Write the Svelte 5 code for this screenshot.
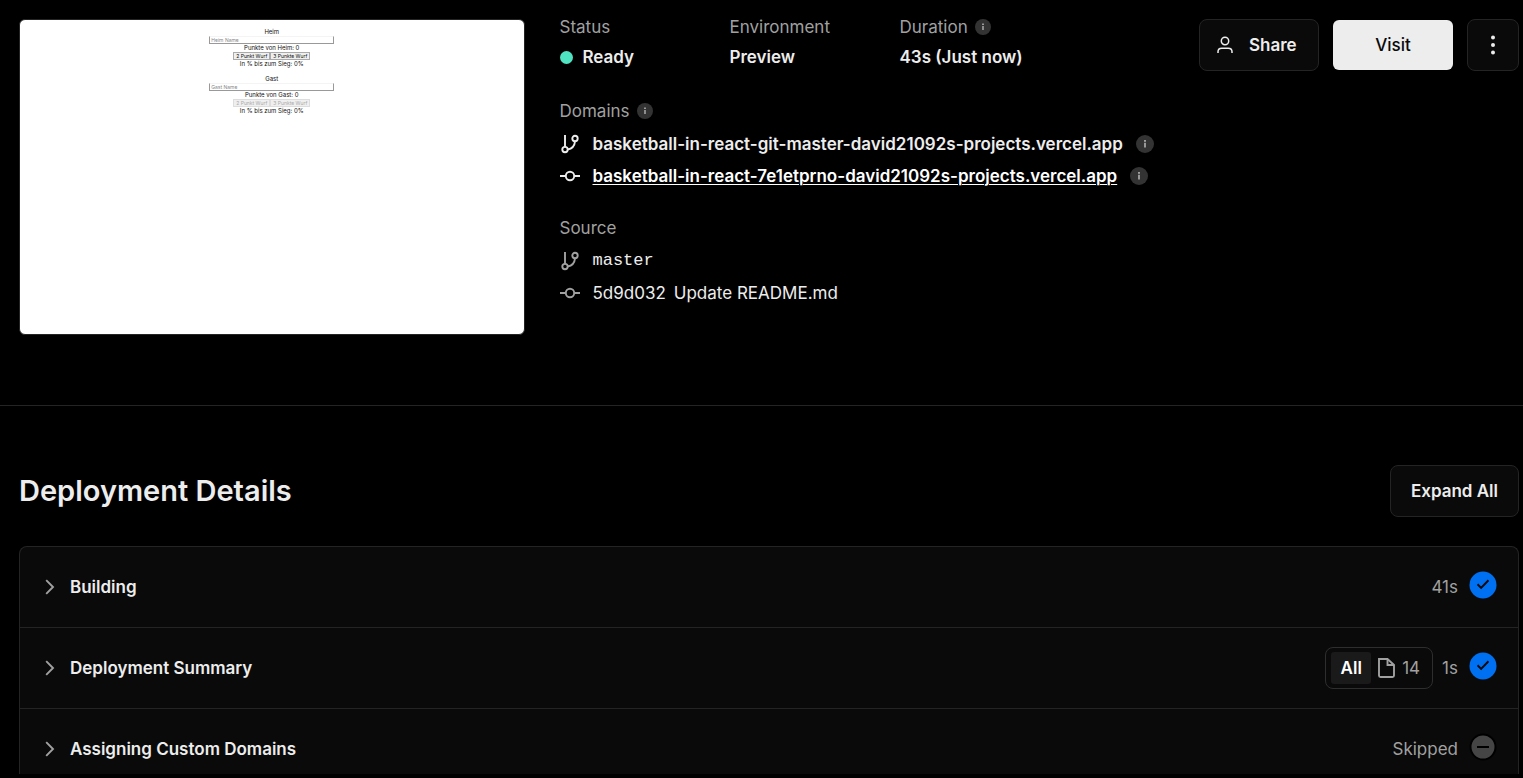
<script>
  const teams = [
    { name: 'Heim', disabled: false },
    { name: 'Gast', disabled: true }
  ];
  const domains = [
    { icon: 'branch', host: 'basketball-in-react-git-master-david21092s-projects.vercel.app', active: false },
    { icon: 'commit', host: 'basketball-in-react-7e1etprno-david21092s-projects.vercel.app', active: true }
  ];
  const steps = [
    { title: 'Building', note: '41s', done: true },
    { title: 'Deployment Summary', note: '1s', done: true, files: 14 },
    { title: 'Assigning Custom Domains', note: 'Skipped', done: false }
  ];
</script>

{#snippet info(large)}
  <svg class="info" class:large viewBox="0 0 16 16" aria-hidden="true">
    <circle cx="8" cy="8" r="8" fill="#333" />
    <path d="M8 6.900v4.200" stroke="#b4b4b4" stroke-width="1.400" />
    <rect x="7.200" y="4.500" width="1.600" height="1.500" fill="#b4b4b4" />
  </svg>
{/snippet}

{#snippet git(kind)}
  <svg class="git" viewBox="0 0 20 20" fill="none" stroke="currentColor" stroke-width="1.900" aria-hidden="true">
    {#if kind === 'branch'}
      <path d="M5 1v12M15 7.200c-.3 4.300-3 7.600-7.500 8.300" />
      <circle cx="5" cy="15.600" r="2.700" />
      <circle cx="15" cy="4.500" r="2.700" />
    {:else}
      <path d="M0 10h5.800M14.200 10H20" />
      <circle cx="10" cy="10" r="4.200" />
    {/if}
  </svg>
{/snippet}

<div class="page">
  <header class="overview">
    <div class="preview">
      {#each teams as team}
        <section class="team">
          <p>{team.name}</p>
          <input type="text" placeholder="{team.name} Name" aria-label="{team.name} Name" />
          <p>Punkte von {team.name}: 0</p>
          <div class="throws">
            <button disabled={team.disabled}>2 Punkt Wurf</button><button disabled={team.disabled}>3 Punkte Wurf</button>
          </div>
          <p>In % bis zum Sieg: 0%</p>
        </section>
      {/each}
    </div>

    <div class="facts">
      <dl class="stats">
        <div>
          <dt>Status</dt>
          <dd><span class="dot"></span>Ready</dd>
        </div>
        <div>
          <dt>Environment</dt>
          <dd>Preview</dd>
        </div>
        <div>
          <dt>Duration {@render info(false)}</dt>
          <dd>43s (Just now)</dd>
        </div>
      </dl>

      <section class="group">
        <h2>Domains {@render info(false)}</h2>
        {#each domains as domain}
          <div class="line strong">
            {@render git(domain.icon)}
            <a href="#domain" class:active={domain.active}>{domain.host}</a>
            {@render info(true)}
          </div>
        {/each}
      </section>

      <section class="group">
        <h2>Source</h2>
        <div class="line source">
          {@render git('branch')}
          <a href="#branch" class="mono">master</a>
        </div>
        <div class="line source">
          {@render git('commit')}
          <a href="#commit" class="commit"><span>5d9d032</span><span>Update README.md</span></a>
        </div>
      </section>
    </div>

    <div class="actions">
      <button class="btn share">
        <svg width="18" height="18" viewBox="0 0 18 18" fill="none" stroke="currentColor" stroke-width="1.500" aria-hidden="true">
          <circle cx="9" cy="5" r="3.700" />
          <path d="M2 17v-1.200c0-2.200 1.500-3.600 3.700-3.600h6.600c2.200 0 3.700 1.400 3.700 3.600V17" />
        </svg>
        Share
      </button>
      <a class="btn visit" href="#visit">Visit</a>
      <button class="btn more" aria-label="More">
        <svg width="20" height="20" viewBox="0 0 20 20" fill="currentColor" aria-hidden="true">
          <circle cx="10" cy="2.600" r="2" /><circle cx="10" cy="10" r="2" /><circle cx="10" cy="17.400" r="2" />
        </svg>
      </button>
    </div>
  </header>

  <main>
    <div class="heading">
      <h1>Deployment Details</h1>
      <button class="btn">Expand All</button>
    </div>

    <div class="steps">
      {#each steps as step}
        <div class="step">
          <button class="toggle">
            <svg width="10" height="16" viewBox="0 0 10 16" fill="none" stroke="#a1a1a1" stroke-width="1.900" aria-hidden="true">
              <path d="M1.200 1.200 8 8l-6.800 6.800" />
            </svg>
            {step.title}
          </button>
          {#if step.files}
            <div class="filter">
              <button class="all">All</button>
              <button class="files">
                <svg width="18" height="20" viewBox="0 0 18 20" fill="none" stroke="currentColor" stroke-width="1.900" aria-hidden="true">
                  <path d="M2 1h8.500L17 7V17.500a1.500 1.500 0 0 1-1.500 1.500h-12A1.500 1.500 0 0 1 2 17.500z" />
                  <path d="M10.500 1v6H17" />
                </svg>
                {step.files}
              </button>
            </div>
          {/if}
          <span class="note">{step.note}</span>
          <svg class="state" viewBox="0 0 28 28" fill="none" stroke="#0a0a0a" stroke-width="2" aria-hidden="true">
            {#if step.done}
              <circle cx="14" cy="14" r="13.500" fill="#0070f3" stroke="none" />
              <path d="m8.500 13.300 3.600 3.600 7.400-7.600" />
            {:else}
              <circle cx="14" cy="14" r="12.500" fill="#454545" stroke="#000" />
              <path d="M8 14h12" stroke="#000" />
            {/if}
          </svg>
        </div>
      {/each}
    </div>
  </main>
</div>

<style>
  :global(body) {
    background: #000;
  }

  .page {
    display: flex;
    flex-direction: column;
    box-sizing: border-box;
    height: 100vh;
    padding-bottom: 4px;
    overflow: hidden;
    background: #000;
    color: #ededed;
    font: 400 17px/20px Inter, 'Liberation Sans', sans-serif;
  }

  .page :is(h1, p, dl, dd) {
    margin: 0;
  }

  a {
    color: inherit;
    text-decoration: none;
  }

  button {
    font: inherit;
    color: inherit;
  }

  svg {
    flex: none;
  }

  .overview {
    display: flex;
    align-items: flex-start;
    padding: 19px 4px 70px 19px;
    border-bottom: 1px solid #242424;
  }

  .preview {
    box-sizing: border-box;
    flex: 0 0 33.700%;
    aspect-ratio: 505 / 316;
    padding-top: 8px;
    border: 1px solid #242424;
    border-radius: 6px;
    background: #fff;
    color: #111;
    font-size: 6px;
    line-height: 8px;
    text-align: center;
  }

  .team {
    display: flex;
    flex-direction: column;
    align-items: center;
    margin-bottom: 7px;
  }

  .team input {
    box-sizing: border-box;
    width: 125px;
    height: 8px;
    padding: 0 1px;
    border: 1px solid #999;
    border-top-color: #f4f4f4;
    background: #fff;
    font: 5px/6px Inter, sans-serif;
  }

  .team input::placeholder {
    color: #888;
  }

  .throws {
    display: flex;
  }

  .throws button {
    box-sizing: border-box;
    height: 8px;
    padding: 0 2px;
    border: 1px solid #aaa;
    background: #efefef;
    color: #111;
    font: 5px/6px Inter, sans-serif;
    white-space: nowrap;
  }

  .throws button:disabled {
    border-color: #ddd;
    color: #aaa;
  }

  .facts {
    flex: 1;
    min-width: 0;
    padding-left: 35px;
  }

  .stats {
    display: grid;
    grid-template-columns: repeat(3, 170px);
  }

  dt,
  h2 {
    display: flex;
    align-items: center;
    gap: 7px;
    height: 16px;
    color: #a1a1a1;
    font-size: 17px;
    font-weight: 400;
  }

  dd {
    display: flex;
    align-items: center;
    gap: 10px;
    height: 16px;
    padding-top: 14px;
    font-weight: 600;
    white-space: nowrap;
  }

  .dot {
    width: 13px;
    height: 13px;
    border-radius: 50%;
    background: #50e3c2;
  }

  .info {
    width: 16px;
    height: 16px;
  }

  .info.large {
    width: 18px;
    height: 18px;
  }

  .group {
    padding-top: 38px;
  }

  .group + .group {
    padding-top: 28px;
  }

  h2 {
    margin: 0 0 9px;
  }

  .line {
    display: flex;
    align-items: center;
    gap: 13px;
    height: 32px;
    white-space: nowrap;
  }

  .strong {
    font-weight: 600;
  }

  .active {
    color: #fff;
    text-decoration: underline;
    text-decoration-thickness: 1px;
    text-underline-offset: 2px;
  }

  .git {
    width: 20px;
    height: 20px;
  }

  .source .git {
    color: #a1a1a1;
  }

  .mono {
    font-family: 'Liberation Mono', monospace;
  }

  .commit {
    display: flex;
    gap: 8px;
  }

  .actions {
    display: flex;
    align-items: center;
    gap: 14px;
  }

  .btn {
    display: flex;
    align-items: center;
    justify-content: center;
    box-sizing: border-box;
    height: 52px;
    padding: 0 20px;
    border: 1px solid #242424;
    border-radius: 8px;
    background: #0a0a0a;
    font-weight: 600;
    white-space: nowrap;
  }

  .share {
    justify-content: flex-start;
    gap: 15px;
    width: 120px;
    padding: 0 15px 0 16px;
  }

  .visit {
    width: 120px;
    height: 50px;
    border: 0;
    border-radius: 6px;
    background: #ededed;
    color: #0a0a0a;
    font-weight: 500;
  }

  .more {
    width: 52px;
    padding: 0;
  }

  main {
    display: flex;
    flex: 1;
    flex-direction: column;
    min-height: 0;
    padding: 59px 4px 0 19px;
  }

  .heading {
    display: flex;
    align-items: center;
    justify-content: space-between;
    margin-bottom: 29px;
  }

  h1 {
    font-size: 29px;
    font-weight: 600;
    line-height: 36px;
  }

  .steps {
    flex: 1;
    min-height: 0;
    overflow: hidden;
    border: 1px solid #242424;
    border-bottom: 0;
    border-radius: 8px 8px 0 0;
    background: #0a0a0a;
  }

  .step {
    display: flex;
    align-items: center;
    height: 80px;
    padding-right: 21px;
  }

  .step + .step {
    border-top: 1px solid #242424;
  }

  .toggle {
    display: flex;
    flex: 1;
    align-items: center;
    gap: 15px;
    height: 100%;
    padding: 0 25px;
    border: 0;
    background: none;
    font-weight: 600;
  }

  .filter {
    display: flex;
    align-items: center;
    box-sizing: border-box;
    height: 42px;
    padding: 0 12px 0 5px;
    margin-right: 9px;
    border: 1px solid #2e2e2e;
    border-radius: 8px;
  }

  .filter button {
    display: flex;
    align-items: center;
    gap: 7px;
    height: 32px;
    padding: 0;
    border: 0;
    background: none;
  }

  .filter .all {
    justify-content: center;
    width: 40px;
    margin-right: 6px;
    border-radius: 3px;
    background: #1a1a1a;
    color: #fff;
    font-weight: 600;
  }

  .files,
  .note {
    color: #a1a1a1;
  }

  .note {
    margin-right: 11px;
  }

  .state {
    width: 28px;
    height: 28px;
    margin-bottom: 4px;
  }
</style>
